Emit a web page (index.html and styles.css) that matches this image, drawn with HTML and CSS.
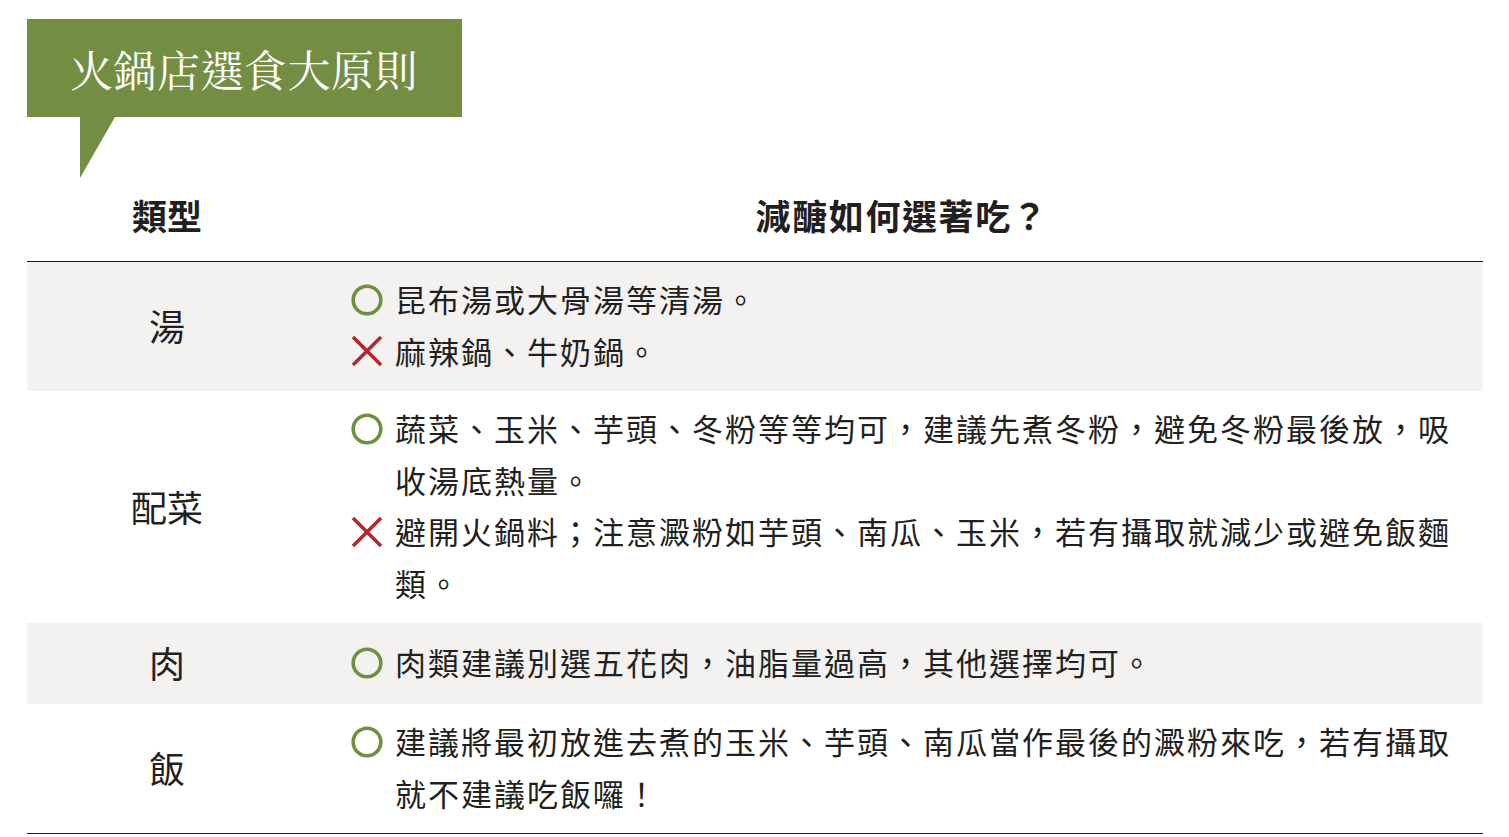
FILE: index.html
```html
<!DOCTYPE html>
<html lang="zh-Hant">
<head>
<meta charset="utf-8">
<title>火鍋店選食大原則</title>
<link rel="stylesheet" href="styles.css">
</head>
<body>
<div class="page">
  <div class="banner"><h1 class="banner-title">火鍋店選食大原則</h1></div>
  <div class="table">
    <div class="row head">
      <div class="c1">類型</div>
      <div class="c2 head-c2">減醣如何選著吃？</div>
    </div>
    <div class="row alt">
      <div class="c1">湯</div>
      <div class="c2">
        <div class="item"><span class="ic"><svg viewBox="0 0 32 32" width="32" height="32"><circle cx="16" cy="16" r="13.8" class="ok"/></svg></span><span class="tx">昆布湯或大骨湯等清湯。</span></div>
        <div class="item"><span class="ic"><svg viewBox="0 0 32 32" width="32" height="32"><path d="M2 2 L30 30 M30 2 L2 30" class="no"/></svg></span><span class="tx">麻辣鍋、牛奶鍋。</span></div>
      </div>
    </div>
    <div class="row">
      <div class="c1">配菜</div>
      <div class="c2">
        <div class="item"><span class="ic"><svg viewBox="0 0 32 32" width="32" height="32"><circle cx="16" cy="16" r="13.8" class="ok"/></svg></span><span class="tx">蔬菜、玉米、芋頭、冬粉等等均可，建議先煮冬粉，避免冬粉最後放，吸收湯底熱量。</span></div>
        <div class="item"><span class="ic"><svg viewBox="0 0 32 32" width="32" height="32"><path d="M2 2 L30 30 M30 2 L2 30" class="no"/></svg></span><span class="tx">避開火鍋料；注意澱粉如芋頭、南瓜、玉米，若有攝取就減少或避免飯麵類。</span></div>
      </div>
    </div>
    <div class="row alt short">
      <div class="c1">肉</div>
      <div class="c2">
        <div class="item"><span class="ic"><svg viewBox="0 0 32 32" width="32" height="32"><circle cx="16" cy="16" r="13.8" class="ok"/></svg></span><span class="tx">肉類建議別選五花肉，油脂量過高，其他選擇均可。</span></div>
      </div>
    </div>
    <div class="row last">
      <div class="c1">飯</div>
      <div class="c2">
        <div class="item"><span class="ic"><svg viewBox="0 0 32 32" width="32" height="32"><circle cx="16" cy="16" r="13.8" class="ok"/></svg></span><span class="tx">建議將最初放進去煮的玉米、芋頭、南瓜當作最後的澱粉來吃，若有攝取就不建議吃飯囉！</span></div>
      </div>
    </div>
  </div>
</div>
</body>
</html>
```

FILE: styles.css
```css
html, body {
  margin: 0;
  padding: 0;
  background: #ffffff;
}
body {
  font-family: "Noto Sans CJK TC", "Noto Sans CJK SC", sans-serif;
  color: #231f20;
}
.page {
  padding: 19px 26px 0 27px;
}
.banner {
  position: relative;
  width: 435px;
  height: 98px;
  background: #738d42;
  display: flex;
  align-items: center;
  box-sizing: border-box;
  padding-left: 43px;
}
.banner::after {
  content: "";
  position: absolute;
  left: 53px;
  top: 98px;
  width: 35px;
  height: 61px;
  background: #738d42;
  clip-path: polygon(0 0, 100% 0, 0 100%);
}
.banner-title {
  margin: 0;
  font-family: "Noto Serif CJK TC", "Noto Serif CJK SC", "Noto Sans CJK TC", serif;
  font-weight: 400;
  font-size: 43px;
  letter-spacing: 0.5px;
  color: #ffffff;
  line-height: 1;
}
.table {
  margin-top: 61px;
  width: 1456px;
  border-bottom: 1px solid #1f1f1f;
}
.row {
  display: grid;
  grid-template-columns: 280px 1fr;
  align-items: center;
}
.row.alt {
  background: #f3f2f1;
}
.row.short {
  min-height: 81px;
}
.row.head {
  padding: 17px 0 26px;
  border-bottom: 1px solid #1f1f1f;
  font-weight: 700;
  font-size: 35px;
  line-height: 40px;
}
.c1 {
  text-align: center;
  font-size: 36px;
  padding-bottom: 3px;
}
.row.head .c1 {
  font-size: 35px;
  padding-bottom: 0;
}
.c2 {
  padding: 11px 18px 15px 44px;
  font-size: 31px;
  line-height: 51.5px;
  letter-spacing: 2px;
}
.row.head .c2 {
  padding: 0 0 0 14px;
  text-align: center;
  font-size: 35px;
  line-height: 40px;
  letter-spacing: 1.6px;
}
.item {
  display: flex;
  align-items: flex-start;
}
.ic {
  flex: 0 0 32px;
  height: 51.5px;
  margin-right: 12px;
  display: flex;
  align-items: center;
  padding-top: 2px;
  box-sizing: border-box;
}
.ic svg {
  display: block;
}
.ok {
  fill: none;
  stroke: #6f9040;
  stroke-width: 3.6;
}
.no {
  fill: none;
  stroke: #b3282d;
  stroke-width: 3.6;
}
.tx {
  flex: 1;
}
```
